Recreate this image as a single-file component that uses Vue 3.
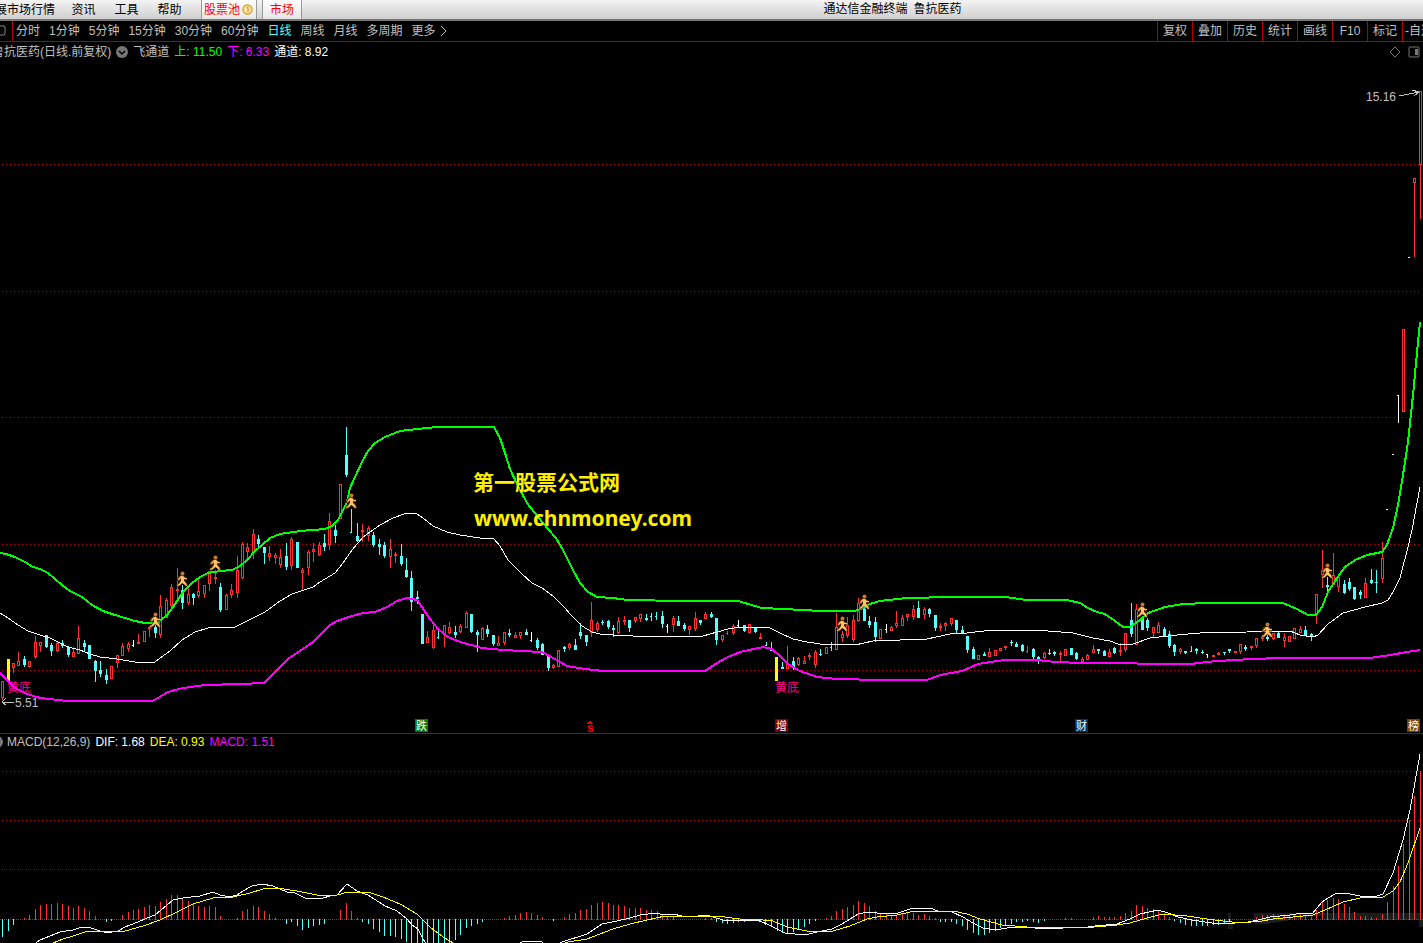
<script setup>
const menus = ['资讯', '工具', '帮助']
const periods = ['分时', '1分钟', '5分钟', '15分钟', '30分钟', '60分钟', '日线', '周线', '月线', '多周期', '更多']
const tools = ['复权', '叠加', '历史', '统计', '画线', 'F10', '标记']

const priceGrid = [164, 291, 417, 544, 670]
const macdGrid = [771, 820, 869]
const zero = 919

// type, x, high, body top, body bottom, low  (r = rise, c = fall, w = flat, t = thin)
const candleData = `
r 2 681 681 697 699;r 13 663 663 667 672;r 18 652 661 665 665;c 24 656 659 664 666;r 29 661 661 666 666
r 35 636 642 656 658;r 40 642 642 645 651;c 46 635 635 646 647;c 51 643 645 650 655;r 57 642 643 650 651
c 62 640 643 645 647;c 68 646 647 654 656;r 73 647 652 656 656;r 78 626 638 653 653;c 84 640 643 646 650
c 89 645 645 658 658;c 95 660 661 670 681;c 100 661 670 673 676;c 106 669 675 679 683;r 111 666 666 678 678
r 117 655 655 662 667;r 122 643 646 655 655;r 128 642 644 648 651;w 133 640 645 645 646;r 138 634 642 643 643
r 144 631 631 641 641;r 149 626 627 628 636;c 155 625 627 632 637;r 160 595 606 634 637;r 166 598 600 617 617
r 171 584 587 605 607;r 177 568 589 590 598;c 182 585 590 602 608;r 188 587 594 602 604;c 193 593 594 597 604
r 198 578 591 595 597;r 204 585 585 593 597;r 209 571 571 583 590;r 215 570 577 578 583;c 220 583 587 609 611
r 226 594 595 609 609;r 231 584 590 594 597;r 237 556 570 592 597;r 242 542 544 577 578;r 247 543 547 551 558
r 253 529 534 551 558;c 258 535 539 543 546;c 264 547 547 552 563;r 269 546 553 556 560;r 275 553 555 557 563
r 280 549 557 564 567;c 286 543 556 566 569;r 291 537 539 565 569;c 297 542 542 567 567;r 302 568 570 572 590
r 308 550 552 567 574;r 313 543 549 551 561;r 319 542 545 554 555;c 324 534 543 546 550;r 329 513 521 544 549
c 335 525 530 535 542;r 340 484 484 518 518;c 346 427 455 474 476;t 351 509 532 532 532;c 357 523 536 540 541
r 362 524 530 531 541;r 368 526 528 535 540;c 373 532 535 544 546;c 379 539 544 546 554;c 384 542 545 555 557
r 390 539 549 556 567;r 395 552 554 555 562;c 401 544 556 563 565;c 406 558 570 576 577;c 411 571 578 601 610
c 417 591 597 598 603;c 422 614 614 643 643;r 427 631 637 642 642;r 433 623 630 647 648;t 438 631 637 637 638
r 444 625 625 634 646;r 449 622 627 632 633;c 455 626 632 634 637;r 460 624 626 631 632;r 466 611 613 627 627
c 471 614 614 631 632;c 477 630 632 634 651;r 482 627 628 639 639;c 487 625 629 633 636;c 493 635 635 643 645
r 498 636 643 645 645;r 504 632 632 642 644;c 509 629 633 634 636;r 515 632 635 637 637;r 520 632 632 635 638
c 526 629 632 634 634;w 531 632 640 640 641;c 537 638 640 647 649;c 542 643 644 654 654;c 548 655 656 667 670
r 553 664 665 667 668;r 558 650 650 666 666;c 564 646 647 648 651;r 569 643 644 647 649;c 575 639 645 649 649
c 580 623 632 635 638;c 586 635 635 641 645;r 591 602 620 632 636;r 597 621 623 629 631;c 602 620 622 622 624
c 608 620 621 626 628;c 613 625 628 629 636;r 618 617 621 632 633;r 624 616 620 621 624;c 629 620 620 627 631
r 635 617 617 620 622;r 640 614 614 618 621;c 646 614 618 619 620;t 651 613 616 616 620;t 656 612 616 616 619
c 662 611 616 623 627;w 667 624 626 626 632;r 673 616 618 624 631;c 678 616 621 625 625;c 684 623 625 628 630
r 689 626 626 629 634;r 695 612 618 628 630;c 700 620 620 622 624;r 705 612 614 618 618;c 711 612 614 616 617
c 716 618 618 639 644;r 722 635 635 639 641;t 727 631 633 633 634 r;r 733 624 626 632 634;w 738 620 625 625 627
c 744 625 625 630 631;r 749 624 624 632 632;c 755 627 628 631 632;r 760 633 637 638 638;t 766 642 645 645 645
t 771 642 650 650 650;c 782 662 667 668 668;r 787 646 663 668 668;c 793 657 661 667 669;r 798 657 658 664 665
r 804 656 661 663 663;r 809 653 655 656 659;r 815 650 652 664 667;c 820 649 654 654 655;r 826 647 647 653 653
t 831 642 647 647 650;r 836 613 627 649 649;r 842 631 634 637 641;r 847 617 625 635 637;r 853 615 620 639 641
r 858 598 603 620 621;c 864 608 609 620 620;c 869 616 621 624 627;c 875 617 622 636 641;r 880 629 629 638 638
w 886 624 629 629 632;r 891 626 627 630 630;r 896 611 623 625 627;r 902 615 618 625 625;r 907 614 614 616 620
r 913 605 609 616 619;c 918 601 608 617 617;r 924 607 609 614 618;c 929 608 609 613 616;c 935 615 615 627 630
r 940 623 626 627 630;r 945 622 623 625 630;r 951 618 618 623 625;c 956 620 620 629 632;c 962 626 630 632 633
c 967 636 636 649 652;c 973 647 649 658 658;r 978 655 655 659 659;c 984 652 654 655 655;r 989 648 652 656 656
r 995 650 650 655 655;r 1000 648 648 650 650;r 1005 646 646 647 649;c 1011 640 642 642 645;c 1016 642 644 646 646
c 1022 644 645 650 651;t 1027 646 651 651 652 r;c 1033 648 649 656 658;c 1038 656 657 658 663;r 1044 652 653 657 658
c 1049 649 653 653 654;c 1054 651 652 653 655;r 1060 651 653 654 660;r 1065 649 649 655 655;c 1071 648 648 654 654
c 1076 652 653 658 659;r 1082 657 659 661 661;r 1087 654 655 659 659;r 1093 645 649 652 652;c 1098 649 649 650 653
c 1104 650 651 655 655;r 1109 649 652 656 656;c 1114 647 648 652 653;r 1120 643 650 651 655;r 1125 633 633 649 651
c 1131 603 620 633 636;r 1136 604 609 644 644;c 1142 616 618 629 629;c 1147 618 620 627 630;r 1153 627 627 632 636
r 1158 622 625 632 632;c 1164 627 629 635 636;c 1169 631 634 645 647;c 1174 644 645 651 655;r 1180 648 649 651 653
c 1185 651 651 652 653;t 1191 646 651 651 651;c 1196 648 649 650 653;c 1202 650 652 652 653;w 1207 654 654 654 657
r 1213 655 655 656 656;r 1218 652 653 654 654;c 1224 652 652 652 654;c 1229 649 649 650 652;r 1235 651 651 652 652
r 1240 644 644 651 653;c 1245 645 647 648 650;r 1251 646 646 647 649;r 1256 638 638 645 647;r 1262 635 637 638 640
c 1267 635 637 638 640;r 1273 633 633 638 639;c 1278 632 633 637 637;r 1284 633 637 640 646;r 1289 636 636 641 641
r 1294 628 628 638 638;r 1300 626 629 632 632;c 1305 626 630 634 635;c 1311 633 634 635 640;r 1316 594 594 613 623
r 1322 550 570 574 587;c 1327 577 585 586 592;r 1333 553 575 584 584;r 1338 575 577 586 591;c 1344 580 584 592 593
c 1349 578 582 588 590;c 1354 587 587 598 599;c 1360 590 592 594 598;r 1365 578 583 597 597;c 1371 569 580 582 583
c 1376 570 582 582 592;r 1382 542 558 578 582;w 1387 509 509 509 509;w 1393 454 454 454 454;w 1398 395 395 395 422
r 1403 329 329 411 411;w 1409 257 257 257 257;r 1414 178 178 182 256;r 1420 91 91 164 218`

const palette = { r: '#ff3232', c: '#54ffff', w: '#ffffff' }
const candles = candleData.trim().split(/[;\n]/).map((row) => {
  const [type, x, hi, top, bot, lo, tint] = row.split(' ')
  const thin = type === 't' || type === 'w'
  return {
    x: +x, hi: +hi, top: +top, bot: +bot, lo: +lo,
    left: x - 1,
    width: thin ? 2 : 3,
    color: palette[tint || (type === 't' ? 'c' : type)],
    hollow: type === 'r' && bot - top > 1,
  }
})

// x and end level of every histogram bar
const barData = `2 936 8 930 13 924 24 918 29 915 35 909 40 905 46 904 51 904 57 903 62 904 68 906 73 908 78 906 84 908 89 911 95 916 106 921 111 920 122 915 128 912 133 910 138 909 144 907 149 905 155 906 160 902 166 899 171 895 177 895 182 898 188 901 193 904 198 906 204 907 209 906 215 907 220 916 237 918 242 911 247 909 253 906 258 907 264 911 269 914 275 918 286 923 291 921 297 925 302 929 308 927 313 925 319 924 324 923 340 910 346 903 351 911 357 918 362 921 368 923 373 928 379 931 384 935 390 935 395 936 401 938 406 941 411 943 417 943 422 943 427 943 433 943 438 943 444 943 449 943 455 939 460 934 466 927 471 925 477 923 482 921 504 918 509 916 515 915 520 913 526 912 531 913 537 915 542 917 553 920 564 917 569 914 575 913 580 910 586 909 591 905 597 903 602 902 608 903 613 905 618 905 624 906 629 908 635 908 640 908 646 910 651 910 657 911 662 914 667 916 673 917 705 918 711 918 716 921 722 922 727 923 733 922 738 921 744 921 760 921 765 924 771 926 777 930 782 932 787 932 793 931 798 929 804 926 809 923 815 920 826 918 831 916 836 911 842 909 847 907 853 905 858 901 864 903 869 906 875 911 880 913 886 914 891 915 896 915 902 914 907 913 913 913 918 915 924 914 929 916 935 918 940 921 945 921 951 921 956 923 962 925 967 929 973 932 978 934 984 934 989 932 995 930 1000 927 1005 925 1011 923 1016 921 1022 921 1027 920 1033 921 1038 922 1044 920 1065 918 1071 918 1093 917 1098 916 1104 917 1109 917 1114 917 1120 916 1125 913 1131 911 1136 905 1142 906 1147 908 1153 909 1158 910 1164 913 1169 917 1174 920 1180 922 1185 924 1191 925 1196 925 1202 925 1207 925 1213 924 1218 924 1224 923 1229 921 1256 917 1262 915 1267 915 1273 914 1278 915 1284 915 1289 915 1294 914 1300 914 1305 916 1311 917 1316 910 1322 901 1327 900 1333 898 1338 899 1344 904 1349 907 1354 912 1360 916 1365 916 1371 917 1376 918 1382 914 1387 902 1393 886 1398 866 1403 844 1409 820 1414 796 1420 771`
const nums = barData.split(' ').map(Number)
const bars = []
for (let i = 0; i < nums.length; i += 2) {
  const [x, v] = [nums[i], nums[i + 1]]
  bars.push({ x, y: Math.min(v, zero), h: Math.abs(v - zero) + 1, color: v < zero ? palette.r : palette.c })
}

const upper = '0,553 6,554 15,557 25,562 33,567 40,569 48,573 55,579 62,585 70,591 82,597 92,605 103,611 115,615 125,618 135,621 145,623 157,623 167,615 173,607 183,592 192,583 200,577 208,573 220,571 232,570 240,566 247,560 255,551 262,545 270,538 280,534 300,531 325,529 332,526 338,520 343,510 347,502 350,488 355,477 362,462 368,451 375,443 385,437 400,431 417,429 437,427 494,427 500,438 506,456 510,469 517,484 527,503 538,517 548,529 556,538 563,550 568,560 573,570 580,583 588,592 597,597 613,598 627,600 683,601 738,601 748,604 762,608 783,609 822,611 855,611 863,608 870,604 880,601 907,598 952,597 1005,597 1027,600 1067,600 1080,603 1088,608 1097,612 1105,614 1115,621 1123,627 1130,627 1140,620 1148,613 1165,607 1183,604 1208,603 1283,603 1297,609 1308,615 1316,615 1322,607 1328,592 1337,578 1345,567 1355,560 1367,555 1382,552 1387,545 1393,528 1398,505 1403,475 1408,442 1413,395 1418,342 1420,322'
const middle = '0,613 8,618 18,625 28,631 40,635 50,638 60,643 68,647 80,650 90,654 100,657 117,659 135,662 155,662 160,658 170,651 182,640 195,632 208,628 220,627 235,627 253,618 265,612 280,601 292,594 313,587 320,582 335,573 343,563 352,550 363,537 380,525 393,518 407,513 417,514 423,518 433,526 447,532 460,535 480,538 494,539 500,546 508,560 522,574 532,583 542,588 553,596 565,608 570,614 582,626 592,632 600,634 613,635 633,636 703,636 717,632 728,629 740,627 770,628 780,633 793,639 807,642 820,644 855,645 873,641 900,640 927,639 950,634 967,633 992,630 1025,630 1048,631 1073,633 1093,638 1110,641 1118,644 1127,645 1133,644 1150,638 1177,635 1200,633 1247,632 1267,631 1290,631 1300,635 1313,637 1318,635 1328,624 1343,613 1365,607 1382,603 1388,600 1393,592 1400,578 1408,547 1412,530 1420,487'
const lower = '0,673 7,680 15,688 27,694 40,698 68,701 152,701 158,698 168,692 183,688 205,685 240,684 264,683 288,659 313,642 330,625 337,621 352,616 363,613 375,612 387,607 397,601 407,598 417,600 422,607 430,619 438,629 448,637 460,642 482,648 503,650 542,652 555,659 567,666 585,669 603,671 705,671 717,663 728,657 740,652 763,647 772,649 780,656 788,664 800,671 817,677 837,679 880,680 927,680 940,675 962,671 978,664 997,661 1005,660 1038,660 1055,662 1083,663 1190,664 1217,661 1252,659 1280,658 1370,658 1390,655 1407,652 1420,650'
const dif = '36,943 40,940 50,936 60,932 73,930 82,927 88,927 97,930 107,933 118,931 125,927 138,922 147,918 155,915 167,905 173,900 183,898 200,896 213,892 220,895 230,897 237,895 243,891 252,886 262,884 273,886 287,892 295,893 305,898 323,898 330,896 337,895 347,884 357,891 368,895 385,906 397,911 407,919 412,925 418,929 422,937 426,944 510,948 522,942 527,941 540,941 545,944 558,944 562,942 587,934 602,924 617,921 630,918 640,915 657,913 663,915 673,914 682,916 690,917 707,915 713,917 723,920 757,920 767,924 777,929 785,933 805,935 817,932 832,929 842,924 850,919 858,914 868,912 877,913 898,913 910,909 930,908 938,911 952,912 963,917 973,923 983,928 995,930 1013,927 1030,927 1040,929 1063,928 1088,927 1095,926 1117,924 1130,919 1140,914 1158,910 1168,913 1178,917 1192,920 1212,923 1235,923 1248,922 1258,920 1270,917 1290,915 1302,913 1312,914 1322,902 1328,898 1337,893 1345,893 1360,896 1377,896 1383,894 1393,873 1403,840 1410,810 1420,754'
const dea = '53,943 63,939 73,936 88,931 125,931 143,926 160,920 177,912 193,904 213,898 233,897 250,893 263,889 277,888 297,891 317,895 337,895 348,892 368,892 383,897 400,904 417,914 430,927 443,937 455,944 560,945 568,942 587,939 613,929 630,924 647,920 665,916 717,916 740,919 763,920 773,921 787,927 807,931 833,931 850,926 867,919 877,917 897,915 910,912 927,911 953,911 967,914 980,919 1002,925 1027,927 1060,928 1095,927 1117,925 1130,923 1147,918 1163,914 1187,916 1207,919 1223,921 1240,923 1262,921 1273,919 1293,917 1313,915 1325,910 1343,902 1360,898 1383,897 1393,891 1400,882 1408,863 1420,828'

const runners = [[149, 613], [176, 572], [209, 556], [345, 494], [836, 617], [858, 595], [1136, 603], [1261, 623], [1321, 564]]
const badges = [
  { text: '跌', x: 415, fill: '#007f00' },
  { text: '增', x: 775, fill: '#800000' },
  { text: '财', x: 1075, fill: '#003466' },
  { text: '榜', x: 1407, fill: '#804000' },
]
</script>

<template>
  <div class="terminal">
    <header class="menubar">
      <nav class="menus">
        <button class="menu first">展市场行情</button>
        <button v-for="m in menus" :key="m" class="menu">{{ m }}</button>
        <button class="tab pool">股票池
          <svg width="11" height="11" viewBox="0 0 11 11"><circle cx="5.5" cy="5.5" r="4.5" fill="#fbe7ae" stroke="#dfa01c" stroke-width="1.4" /><path d="M4.5 3.5h1.5v4.5" fill="none" stroke="#dfa01c" stroke-width="1.3" /></svg>
        </button>
        <button class="tab">市场</button>
      </nav>
      <div class="title"><span>通达信金融终端</span><span>鲁抗医药</span></div>
    </header>

    <div class="toolbar">
      <button class="dock" aria-label="侧栏">
        <svg width="12" height="20" viewBox="0 0 12 20"><path d="M0 5h4l1 1v7l-1 1H0" fill="none" stroke="#888" /></svg>
      </button>
      <nav class="periods">
        <button v-for="p in periods" :key="p" :class="{ active: p === '日线' }">{{ p }}</button>
        <svg class="more" width="7" height="12" viewBox="0 0 7 12"><path d="M1 1l5 5-5 5" fill="none" stroke="#c0c0c0" /></svg>
      </nav>
      <div class="tools">
        <button v-for="t in tools" :key="t">{{ t }}</button>
        <button class="cut">-自选</button>
      </div>
    </div>

    <section class="panel">
      <div class="info">
        <span class="name">鲁抗医药(日线.前复权)</span>
        <svg class="chev" width="12" height="12" viewBox="0 0 12 12"><circle cx="6" cy="6" r="6" fill="#777" /><path d="M3 5l3 3 3-3" fill="none" stroke="#000" stroke-width="1.5" /></svg>
        <span>飞通道</span>
        <span class="green">上: 11.50</span>
        <span class="magenta">下: 6.33</span>
        <span class="white">通道: 8.92</span>
        <span class="corner">
          <svg width="12" height="12" viewBox="0 0 12 12"><path d="M6 1l5 5-5 5-5-5z" fill="none" stroke="#777" /></svg>
          <svg width="12" height="12" viewBox="0 0 12 12"><rect x="1" y="1" width="10" height="10" rx="1" fill="none" stroke="#777" /><path d="M7 3h3v6H7z" fill="#777" /></svg>
        </span>
      </div>
      <svg class="chart" viewBox="0 61 1423 672">
        <defs>
          <pattern id="dots" x="2" y="0" width="4" height="1" patternUnits="userSpaceOnUse"><rect width="1" height="1" fill="#b00000" /></pattern>
          <g id="runner">
            <path d="M6 4L3 6 2 9M6 4l3 3 2 0M6 4v6M6 9l-2 3-3 2M6 9l3 2 2 3" fill="none" stroke="#6b3508" stroke-width="3" />
            <circle cx="6.5" cy="1.500" r="2" fill="#c47a2c" />
            <path d="M5 4h2l2 2h2v1H8v2l2 2 1 3h-1l-2-2-2-1-2 2-3 1v-1l2-1 2-3V6L3 8H2l1-2z" fill="#ffc468" />
          </g>
        </defs>
        <rect v-for="y in priceGrid" :key="y" x="2" :y="y" width="1418" height="1" fill="url(#dots)" />
        <g v-for="k in candles" :key="k.x">
          <rect :x="k.x" :y="k.hi" width="1" :height="k.lo - k.hi + 1" :fill="k.color" />
          <rect :x="k.left" :y="k.top" :width="k.width" :height="k.bot - k.top + 1" :fill="k.color" />
          <rect v-if="k.hollow" :x="k.x" :y="k.top + 1" width="1" :height="k.bot - k.top - 1" fill="#000" />
        </g>
        <rect x="7" y="659" width="3" height="22" fill="#ff0" />
        <rect x="775" y="657" width="3" height="24" fill="#ff0" />
        <text x="7" y="692" class="low">黄底</text>
        <text x="775" y="692" class="low">黄底</text>
        <polyline :points="middle" class="line" stroke="#fff" />
        <polyline :points="upper" class="line thick" stroke="#0f0" />
        <polyline :points="lower" class="line thick" stroke="#f0f" />
        <use v-for="r in runners" :key="r[0]" href="#runner" :x="r[0]" :y="r[1]" class="smooth" />

        <text x="1366" y="101" class="mark">15.16</text>
        <path d="M1399 96l20-4M1412 90l7 2-5 4" fill="none" stroke="#c0c0c0" />
        <text x="15" y="707" class="mark">5.51</text>
        <path d="M14 702H2M6 698l-4 4 4 3" fill="none" stroke="#c0c0c0" />

        <g v-for="b in badges" :key="b.text">
          <rect :x="b.x" y="719" width="13" height="13" :fill="b.fill" />
          <text :x="b.x + 1" y="730" class="badge">{{ b.text }}</text>
        </g>
        <path d="M588 723h4l-2-2z" fill="#f00" stroke="#f00" />
        <text x="587" y="732" class="dollar">s</text>

        <text x="473" y="490" class="site">第一股票公式网</text>
        <text x="474" y="526" class="site url">www.chnmoney.com</text>
      </svg>
    </section>

    <section class="panel macd">
      <div class="info">
        <svg class="half" width="3" height="12" viewBox="3 0 3 12"><circle cx="0" cy="6" r="6" fill="#777" /></svg>
        <span>MACD(12,26,9)</span>
        <span class="white">DIF: 1.68</span>
        <span class="yellow">DEA: 0.93</span>
        <span class="magenta">MACD: 1.51</span>
      </div>
      <svg class="chart" viewBox="0 750 1423 193">
        <defs>
          <pattern id="fine" x="0" y="0" width="2" height="1" patternUnits="userSpaceOnUse"><rect width="1" height="1" fill="#c81e1e" /></pattern>
        </defs>
        <path d="M1254 913h169v14h-4v-7h-94v-4h-9l-25 4-25 4h-12zM1228 913h3v11h2v5h-5z" fill="#1c1c1c" />
        <rect v-for="y in macdGrid" :key="y" x="2" :y="y" width="1418" height="1" fill="url(#dots)" />
        <rect x="0" :y="zero" width="1423" height="1" fill="url(#fine)" />
        <rect v-for="b in bars" :key="b.x" :x="b.x" :y="b.y" width="1" :height="b.h" :fill="b.color" />
        <polyline :points="dif" class="line" stroke="#fff" />
        <polyline :points="dea" class="line" stroke="#ff0" />
      </svg>
    </section>
  </div>
</template>

<style>
body { margin: 0; background: #000; }
</style>

<style scoped>
.terminal {
  min-height: 100vh;
  background: #000;
  color: #c0c0c0;
  font: 12px/18px "Liberation Sans", "Noto Sans CJK SC", sans-serif;
  overflow: hidden;
  white-space: nowrap;
}
button {
  margin: 0;
  padding: 0;
  border: 0;
  background: none;
  color: inherit;
  font: inherit;
  white-space: nowrap;
}
.menubar {
  display: flex;
  height: 21px;
  box-sizing: border-box;
  background: linear-gradient(#f4f4f4, #cfcfcf);
  border-bottom: 2px solid #777;
  color: #000;
}
.menus { display: flex; }
.menu { width: 43px; }
.menu.first { width: 62px; margin-left: -5px; margin-right: 5px; text-align: left; }
.menus .tab {
  width: 40px;
  color: #f00;
  background: linear-gradient(#fff, #e6e6e6);
  border-left: 1px solid #999;
  border-right: 1px solid #999;
}
.menus .pool {
  display: flex;
  align-items: center;
  gap: 2px;
  width: 56px;
  margin-left: 10px;
  margin-right: 5px;
  padding-left: 2px;
}
.title {
  display: flex;
  flex: 1;
  justify-content: center;
  gap: 6px;
  padding-left: 60px;
}
.toolbar {
  display: flex;
  height: 20px;
  border-bottom: 1px solid #b00000;
}
.dock { width: 13px; border-right: 1px solid #b00000; }
.dock svg { display: block; }
.periods { display: flex; align-items: center; gap: 9px; padding-left: 3px; }
.periods .active { color: #54ffff; }
.more { margin-left: -5px; }
.tools { display: flex; margin-left: auto; }
.tools button { width: 35px; border-left: 1px solid #b00000; }
.tools .cut { width: 21px; padding-left: 2px; overflow: hidden; text-align: left; }
.info {
  display: flex;
  align-items: center;
  height: 19px;
  gap: 5px;
}
.name { margin-left: -8px; }
.corner { display: flex; gap: 7px; margin-left: auto; padding-right: 3px; }
.macd { border-top: 1px solid #b00000; }
.macd .info { height: 16px; }
.half { margin-right: -1px; }
.green { color: #0f0; }
.magenta { color: #f0f; }
.white { color: #fff; }
.yellow { color: #ff0; }
.chart { display: block; width: 100%; height: auto; shape-rendering: crispEdges; }
.line { fill: none; stroke-width: 1; }
.thick { stroke-width: 2; }
.smooth { shape-rendering: auto; }
.low { fill: #ff0080; }
.mark { fill: #c0c0c0; }
.badge { fill: #fff; font-size: 11px; }
.dollar { fill: #f00; font-weight: bold; }
.site {
  fill: #ffee00;
  font: bold 21px "Noto Sans CJK SC", sans-serif;
}
.url { font-family: "Noto Sans", "Open Sans", sans-serif; }
</style>
